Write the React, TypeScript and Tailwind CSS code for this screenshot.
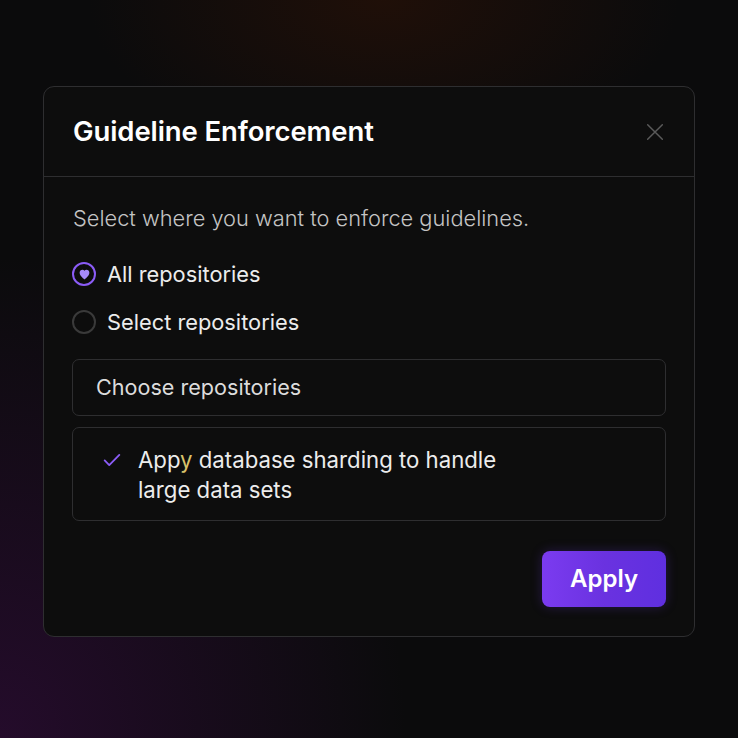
import React, { useState } from 'react';

const Radio: React.FC<{ checked: boolean }> = ({ checked }) => (
  <span
    className={`flex h-6 w-6 shrink-0 items-center justify-center rounded-full border-2 ${
      checked ? 'border-[#8b5cf6]' : 'border-[#3a3a3a]'
    }`}
  >
    {checked && (
      <svg width="13" height="12" viewBox="0 0 24 22" aria-hidden="true">
        <path
          d="M12 21s-9-6.2-9-12.2C3 5.3 5.4 3 8.3 3c1.6 0 2.9.8 3.7 2 .8-1.2 2.1-2 3.7-2C18.6 3 21 5.3 21 8.8 21 14.8 12 21 12 21z"
          fill="#a78bfa"
        />
      </svg>
    )}
  </span>
);

export default function App() {
  const [mode, setMode] = useState<'all' | 'select'>('all');

  return (
    <div
      className="relative flex h-[738px] w-[738px] items-start justify-center overflow-hidden bg-[#0b0b0c] pt-[86px]"
      style={{ fontFamily: 'Inter, "Noto Sans", sans-serif' }}
    >
      <div className="pointer-events-none absolute inset-0 bg-[radial-gradient(ellipse_40%_22%_at_52%_0%,_rgba(45,18,6,0.6)_0%,_transparent_100%)]" />
      <div className="pointer-events-none absolute inset-0 bg-[radial-gradient(ellipse_55%_65%_at_0%_100%,_rgba(50,12,60,0.65)_0%,_transparent_100%)]" />

      <div className="relative w-[652px] rounded-[11px] border border-[#2e2e30] bg-[#0d0d0d]">
        <div className="flex h-[90px] items-center justify-between border-b border-[#2e2e30] pl-[29px] pr-[28px]">
          <h1 className="text-[27.5px] font-semibold tracking-[-0.1px] text-white">Guideline Enforcement</h1>
          <svg width="22" height="22" viewBox="0 0 24 24" className="text-[#5a5a5a]" aria-hidden="true">
            <path d="M4 4l16 16M20 4L4 20" stroke="currentColor" strokeWidth="1.6" strokeLinecap="round" />
          </svg>
        </div>

        <div className="px-[28px] pb-[29px] pt-[26px]">
          <p className="ml-px text-[21.8px] font-light leading-[30px] text-[#c4c4c4]">
            Select where you want to enforce guidelines.
          </p>

          <div className="mt-[26px] flex flex-col gap-[18px]">
            <button className="flex h-[30px] items-center gap-[11px] text-left" onClick={() => setMode('all')}>
              <Radio checked={mode === 'all'} />
              <span className="text-[21.8px] leading-[30px] text-[#ececec]">All repositories</span>
            </button>
            <button className="flex h-[30px] items-center gap-[11px] text-left" onClick={() => setMode('select')}>
              <Radio checked={mode === 'select'} />
              <span className="text-[21.8px] leading-[30px] text-[#ececec]">Select repositories</span>
            </button>
          </div>

          <div className="mt-[22px] flex h-[57px] items-center rounded-[7px] border border-[#2e2e30] px-[23px]">
            <span className="text-[21.6px] text-[#dcdcdc]">Choose repositories</span>
          </div>

          <div className="mt-[11px] flex h-[94px] items-start rounded-[7px] border border-[#2e2e30] pl-[28px] pt-[17px]">
            <svg width="22" height="22" viewBox="0 0 24 24" className="mt-[4px] shrink-0 text-[#8b5cf6]" aria-hidden="true">
              <path d="M4 12.5l5 5L20 6.5" fill="none" stroke="currentColor" strokeWidth="2" strokeLinecap="round" strokeLinejoin="round" />
            </svg>
            <p className="ml-[15px] w-[380px] text-[22.2px] leading-[30px] text-[#ececec]">
              App<span className="text-[#d9c26a]">y</span> database sharding to handle large data sets
            </p>
          </div>

          <div className="mt-[30px] flex justify-end">
            <button className="h-[56px] w-[124px] rounded-[8px] bg-gradient-to-r from-[#7b3bf0] via-[#6a32e0] to-[#5f2fe0] text-[24px] font-semibold text-white shadow-[0_0_12px_rgba(110,60,240,0.25)]">
              Apply
            </button>
          </div>
        </div>
      </div>
    </div>
  );
}
